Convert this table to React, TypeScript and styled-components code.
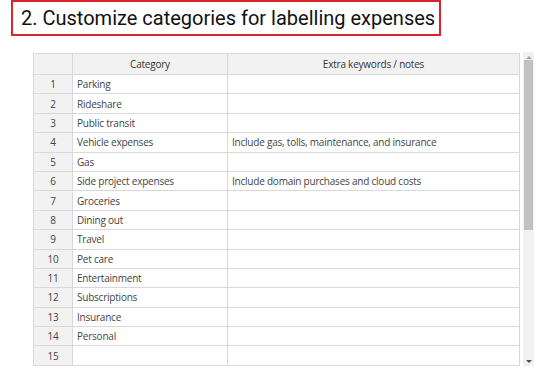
import styled, { createGlobalStyle } from "styled-components";

const GlobalStyle = createGlobalStyle`
    html, body {
        margin: 0;
        padding: 0;
        background: #fff;
    }
`;

const Page = styled.div`
    width: 550px;
    height: 380px;
    overflow: hidden;
    display: flex;
    flex-direction: column;
    align-items: flex-start;
`;

const TitleBox = styled.div`
    margin-left: 11px;
    width: 430px;
    height: 36px;
    box-sizing: border-box;
    border: 2px solid #d8262c;
    display: flex;
    align-items: center;
    padding-left: 8px;
    font-family: Roboto, "Noto Sans", sans-serif;
    font-size: 20px;
    color: #111;
    white-space: nowrap;
`;

const SheetArea = styled.div`
    margin-top: 16px;
    margin-left: 33px;
    display: flex;
    gap: 3px;
`;

const Table = styled.table`
    border-collapse: collapse;
    table-layout: fixed;
    width: 486px;
    margin-top: 1px;
    font-family: "Open Sans", "Noto Sans", sans-serif;
    font-size: 10px;
    letter-spacing: -0.22px;
    color: #444;
    align-self: flex-start;
`;

const HeadCell = styled.th`
    height: 20px;
    padding: 0 4px;
    background: #f2f2f2;
    border: 1px solid #d9d9d9;
    font-weight: 400;
    text-align: center;
    color: #333;
`;

const RowNum = styled.td`
    height: 18.4px;
    padding: 0;
    background: #f2f2f2;
    border: 1px solid #d9d9d9;
    text-align: center;
    color: #444;
`;

const Cell = styled.td`
    height: 18.4px;
    padding: 0 4px;
    border: 1px solid #d9d9d9;
    white-space: nowrap;
    overflow: hidden;
`;

const Scrollbar = styled.div`
    width: 11px;
    height: 314px;
    background: #f1f1f1;
    display: flex;
    flex-direction: column;
    align-items: center;
    justify-content: space-between;
    padding: 4px 0 3px;
    box-sizing: border-box;
`;

const Thumb = styled.div`
    width: 9px;
    height: 170px;
    background: #c1c1c1;
    margin-top: 1px;
`;

const Arrow = styled.div<{ $down?: boolean }>`
    width: 0;
    height: 0;
    border-left: 3px solid transparent;
    border-right: 3px solid transparent;
    ${(p) =>
        p.$down
            ? "border-top: 3px solid #505050;"
            : "border-bottom: 3px solid #a3a3a3;"}
`;

const Spacer = styled.div`
    flex: 1;
`;

const rows: [string, string][] = [
    ["Parking", ""],
    ["Rideshare", ""],
    ["Public transit", ""],
    ["Vehicle expenses", "Include gas, tolls, maintenance, and insurance"],
    ["Gas", ""],
    ["Side project expenses", "Include domain purchases and cloud costs"],
    ["Groceries", ""],
    ["Dining out", ""],
    ["Travel", ""],
    ["Pet care", ""],
    ["Entertainment", ""],
    ["Subscriptions", ""],
    ["Insurance", ""],
    ["Personal", ""],
    ["", ""],
];

export default function App() {
    return (
        <>
            <GlobalStyle />
            <Page>
                <TitleBox>2. Customize categories for labelling expenses</TitleBox>
                <SheetArea>
                    <Table>
                        <colgroup>
                            <col style={{ width: 39 }} />
                            <col style={{ width: 155 }} />
                            <col style={{ width: 292 }} />
                        </colgroup>
                        <thead>
                            <tr>
                                <HeadCell />
                                <HeadCell>Category</HeadCell>
                                <HeadCell>Extra keywords / notes</HeadCell>
                            </tr>
                        </thead>
                        <tbody>
                            {rows.map(([cat, note], i) => (
                                <tr key={i}>
                                    <RowNum>{i + 1}</RowNum>
                                    <Cell>{cat}</Cell>
                                    <Cell>{note}</Cell>
                                </tr>
                            ))}
                        </tbody>
                    </Table>
                    <Scrollbar>
                        <Arrow />
                        <Thumb />
                        <Spacer />
                        <Arrow $down />
                    </Scrollbar>
                </SheetArea>
            </Page>
        </>
    );
}
